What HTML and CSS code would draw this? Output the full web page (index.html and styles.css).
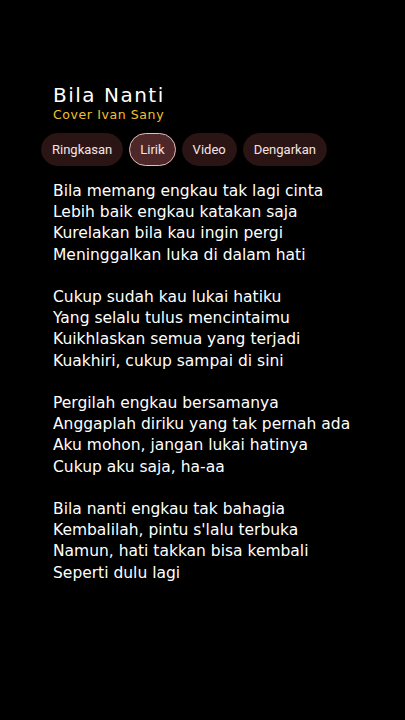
FILE: index.html
```html
<!DOCTYPE html>
<html lang="id">
<head>
<meta charset="utf-8">
<link rel="stylesheet" href="styles.css">
</head>
<body>
<main class="page">
  <header class="head">
    <h1 class="title">Bila Nanti</h1>
    <p class="artist">Cover Ivan Sany</p>
  </header>
  <nav class="chips">
    <span class="chip">Ringkasan</span>
    <span class="chip active">Lirik</span>
    <span class="chip">Video</span>
    <span class="chip">Dengarkan</span>
  </nav>
  <section class="lyrics">
    <p class="stanza">Bila memang engkau tak lagi cinta<br>Lebih baik engkau katakan saja<br>Kurelakan bila kau ingin pergi<br>Meninggalkan luka di dalam hati</p>
    <p class="stanza">Cukup sudah kau lukai hatiku<br>Yang selalu tulus mencintaimu<br>Kuikhlaskan semua yang terjadi<br>Kuakhiri, cukup sampai di sini</p>
    <p class="stanza">Pergilah engkau bersamanya<br>Anggaplah diriku yang tak pernah ada<br>Aku mohon, jangan lukai hatinya<br>Cukup aku saja, ha-aa</p>
    <p class="stanza">Bila nanti engkau tak bahagia<br>Kembalilah, pintu s'lalu terbuka<br>Namun, hati takkan bisa kembali<br>Seperti dulu lagi</p>
  </section>
</main>
</body>
</html>
```
FILE: styles.css
```css
html, body {
  margin: 0;
  padding: 0;
  background: #000;
}
.page {
  width: 405px;
  height: 720px;
  box-sizing: border-box;
  padding: 84px 0 0 41px;
  color: #fff;
}
.head {
  padding-left: 12px;
}
.title {
  margin: 0;
  font-family: "DejaVu Sans", sans-serif;
  font-weight: normal;
  font-size: 20px;
  line-height: 22px;
  letter-spacing: 1.5px;
  color: #fff;
}
.artist {
  margin: 1px 0 0;
  font-family: "DejaVu Sans", sans-serif;
  font-size: 12.5px;
  line-height: 15px;
  letter-spacing: 0.6px;
  color: #f2c12e;
}
.chips {
  display: flex;
  gap: 6px;
  margin-top: 11px;
}
.chip {
  display: flex;
  align-items: center;
  height: 33px;
  box-sizing: border-box;
  padding: 0 10px;
  border-radius: 17px;
  background: #2b1414;
  border: 1px solid #2b1414;
  font-family: Roboto, "Noto Sans", sans-serif;
  font-size: 13px;
  color: #f3e4e4;
}
.chip.active {
  background: #4e2828;
  border-color: #e3bdbd;
}
.lyrics {
  margin-top: 15px;
  padding-left: 12px;
}
.stanza {
  margin: 0 0 21.2px;
  font-family: "DejaVu Sans", sans-serif;
  font-size: 15.5px;
  line-height: 21.2px;
  color: #fff;
}
```
